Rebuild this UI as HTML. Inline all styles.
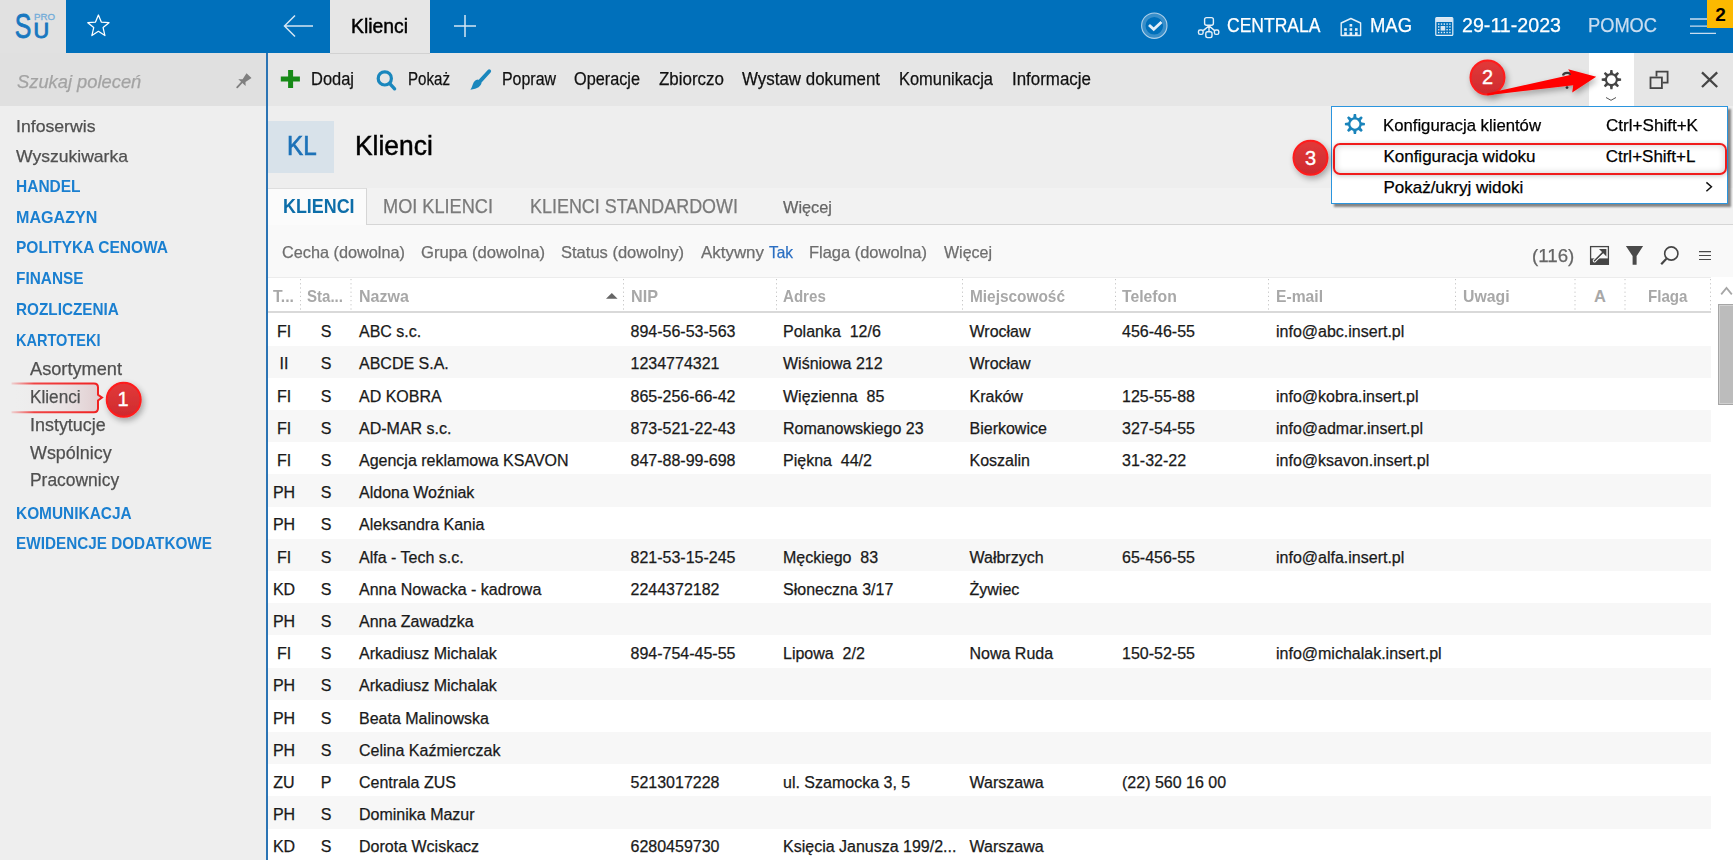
<!DOCTYPE html>
<html><head><meta charset="utf-8"><style>
html,body{margin:0;padding:0;}
body{width:1733px;height:860px;overflow:hidden;position:relative;background:#eeeeee;font-family:'Liberation Sans', sans-serif;}
.t{position:absolute;white-space:pre;line-height:1;}
.s{-webkit-text-stroke:0.25px currentColor;}
svg{position:absolute;overflow:visible;}
</style></head><body>
<div style="position:absolute;left:0px;top:0px;width:1733px;height:53px;background:#0070bb;"></div><div style="position:absolute;left:0px;top:0px;width:66px;height:53px;background:#e1e1e1;"></div><div style="position:absolute;left:0px;top:52.5px;width:266px;height:1.0px;background:#d8dfe6;"></div><div style="position:absolute;left:330px;top:0px;width:100px;height:53px;background:#e6e6e6;"></div><div style="position:absolute;left:0px;top:53px;width:266px;height:807px;background:#eeeeee;"></div><div style="position:absolute;left:0px;top:53px;width:266px;height:52.5px;background:#e0e0e0;"></div><div style="position:absolute;left:266px;top:53px;width:2px;height:807px;background:#2b74b4;"></div><div style="position:absolute;left:268px;top:53px;width:1465px;height:52.5px;background:#e6e6e6;"></div><div style="position:absolute;left:1589px;top:53px;width:45px;height:52.5px;background:#ffffff;"></div><div style="position:absolute;left:330px;top:53px;width:100px;height:1px;background:#d2d2d2;"></div><div style="position:absolute;left:268px;top:105.5px;width:1465px;height:82.5px;background:#eeeeee;"></div><div style="position:absolute;left:268px;top:121px;width:66px;height:52px;background:#d8e2ea;"></div><div style="position:absolute;left:268px;top:188px;width:1465px;height:37px;background:#f2f2f2;"></div><div style="position:absolute;left:268px;top:224.2px;width:1465px;height:1.0px;background:#d6d6d6;"></div><div style="position:absolute;left:268px;top:188px;width:99px;height:37.19999999999999px;background:#fbfbfb;border-top:1px solid #dedede;border-right:1px solid #d6d6d6;box-sizing:border-box;"></div><div style="position:absolute;left:268px;top:225.2px;width:1465px;height:51.80000000000001px;background:#f9f9f9;"></div><div style="position:absolute;left:268px;top:277px;width:1465px;height:1px;background:#ececec;"></div><div style="position:absolute;left:268px;top:278px;width:1443px;height:33px;background:#ffffff;"></div><div style="position:absolute;left:268px;top:311px;width:1443px;height:2px;background:#d9d9d9;box-shadow:0 1px 1px rgba(0,0,0,0.05);"></div><div style="position:absolute;left:1711px;top:277px;width:22px;height:583px;background:#ffffff;"></div><div style="position:absolute;left:1718px;top:304px;width:15px;height:100.5px;background:#bcbcbc;border:1.5px solid #a6a6a6;border-right:none;box-sizing:border-box;box-shadow:inset 1px 1px 0 #d0d0d0, inset 0 -1px 0 #d0d0d0;"></div><div style="position:absolute;left:268px;top:313px;width:1443px;height:547px;background:#ffffff;"></div><div style="position:absolute;left:268px;top:345.6px;width:1443px;height:32.19999999999999px;background:#f7f7f7;"></div><div style="position:absolute;left:268px;top:410.0px;width:1443px;height:32.19999999999999px;background:#f7f7f7;"></div><div style="position:absolute;left:268px;top:474.4px;width:1443px;height:32.200000000000045px;background:#f7f7f7;"></div><div style="position:absolute;left:268px;top:538.8px;width:1443px;height:32.200000000000045px;background:#f7f7f7;"></div><div style="position:absolute;left:268px;top:603.2px;width:1443px;height:32.19999999999993px;background:#f7f7f7;"></div><div style="position:absolute;left:268px;top:667.6px;width:1443px;height:32.19999999999993px;background:#f7f7f7;"></div><div style="position:absolute;left:268px;top:732.0px;width:1443px;height:32.200000000000045px;background:#f7f7f7;"></div><div style="position:absolute;left:268px;top:796.4px;width:1443px;height:32.200000000000045px;background:#f7f7f7;"></div><svg width="1733" height="860" style="left:0;top:0"><defs><linearGradient id="cg0" x1="0" y1="0" x2="1" y2="0"><stop offset="0" stop-color="#eeeeee" stop-opacity="0"/><stop offset="1" stop-color="#e0cbce"/></linearGradient></defs><path d="M11.5,383.4 H94 Q98,383.4 98,387.4 V394.8 L102,397.6 L98,400.4 V408.2 Q98,412.2 94,412.2 H11.5 Z" fill="url(#cg0)"/></svg><svg width="1733" height="860" style="left:0;top:0"><g stroke="#c4c4c4" stroke-width="1" stroke-dasharray="1.2 3"><line x1="300.5" y1="279" x2="300.5" y2="311" /><line x1="351.0" y1="279" x2="351.0" y2="311" /><line x1="623.5" y1="279" x2="623.5" y2="311" /><line x1="776.5" y1="279" x2="776.5" y2="311" /><line x1="962.5" y1="279" x2="962.5" y2="311" /><line x1="1115.5" y1="279" x2="1115.5" y2="311" /><line x1="1268.5" y1="279" x2="1268.5" y2="311" /><line x1="1455.5" y1="279" x2="1455.5" y2="311" /><line x1="1575.0" y1="279" x2="1575.0" y2="311" /><line x1="1625.0" y1="279" x2="1625.0" y2="311" /><line x1="1710.5" y1="279" x2="1710.5" y2="311" /></g></svg><div style="position:absolute;left:1331px;top:106px;width:397px;height:97.5px;background:#fff;border:1px solid #2b95de;box-sizing:border-box;box-shadow:3px 3px 2px rgba(0,0,0,0.45);"></div><div style="position:absolute;left:1333px;top:143px;width:394px;height:32px;border:2.5px solid #f01c1c;border-radius:7px;box-sizing:border-box;box-shadow:0 1px 5px rgba(0,0,0,0.22), inset 0 0 7px rgba(0,0,0,0.2);"></div>
<div class="t s" style="left:276.9px;top:324.16px;font-size:16px;font-weight:400;color:#1a1a1a;">FI</div><div class="t s" style="left:320.7px;top:324.16px;font-size:16px;font-weight:400;color:#1a1a1a;">S</div><div class="t s" style="left:359.0px;top:324.16px;font-size:16px;font-weight:400;color:#1a1a1a;">ABC s.c.</div><div class="t s" style="left:630.5px;top:324.16px;font-size:16px;font-weight:400;color:#1a1a1a;">894-56-53-563</div><div class="t s" style="left:783.0px;top:324.16px;font-size:16px;font-weight:400;color:#1a1a1a;">Polanka  12/6</div><div class="t s" style="left:969.5px;top:324.16px;font-size:16px;font-weight:400;color:#1a1a1a;">Wrocław</div><div class="t s" style="left:1122.0px;top:324.16px;font-size:16px;font-weight:400;color:#1a1a1a;">456-46-55</div><div class="t s" style="left:1276.0px;top:324.16px;font-size:16px;font-weight:400;color:#1a1a1a;">info@abc.insert.pl</div><div class="t s" style="left:279.6px;top:356.36px;font-size:16px;font-weight:400;color:#1a1a1a;">II</div><div class="t s" style="left:320.7px;top:356.36px;font-size:16px;font-weight:400;color:#1a1a1a;">S</div><div class="t s" style="left:359.0px;top:356.36px;font-size:16px;font-weight:400;color:#1a1a1a;">ABCDE S.A.</div><div class="t s" style="left:630.5px;top:356.36px;font-size:16px;font-weight:400;color:#1a1a1a;">1234774321</div><div class="t s" style="left:783.0px;top:356.36px;font-size:16px;font-weight:400;color:#1a1a1a;">Wiśniowa 212</div><div class="t s" style="left:969.5px;top:356.36px;font-size:16px;font-weight:400;color:#1a1a1a;">Wrocław</div><div class="t s" style="left:1122.0px;top:356.36px;font-size:16px;font-weight:400;color:#1a1a1a;"></div><div class="t s" style="left:1276.0px;top:356.36px;font-size:16px;font-weight:400;color:#1a1a1a;"></div><div class="t s" style="left:276.9px;top:388.56px;font-size:16px;font-weight:400;color:#1a1a1a;">FI</div><div class="t s" style="left:320.7px;top:388.56px;font-size:16px;font-weight:400;color:#1a1a1a;">S</div><div class="t s" style="left:359.0px;top:388.56px;font-size:16px;font-weight:400;color:#1a1a1a;">AD KOBRA</div><div class="t s" style="left:630.5px;top:388.56px;font-size:16px;font-weight:400;color:#1a1a1a;">865-256-66-42</div><div class="t s" style="left:783.0px;top:388.56px;font-size:16px;font-weight:400;color:#1a1a1a;">Więzienna  85</div><div class="t s" style="left:969.5px;top:388.56px;font-size:16px;font-weight:400;color:#1a1a1a;">Kraków</div><div class="t s" style="left:1122.0px;top:388.56px;font-size:16px;font-weight:400;color:#1a1a1a;">125-55-88</div><div class="t s" style="left:1276.0px;top:388.56px;font-size:16px;font-weight:400;color:#1a1a1a;">info@kobra.insert.pl</div><div class="t s" style="left:276.9px;top:420.76px;font-size:16px;font-weight:400;color:#1a1a1a;">FI</div><div class="t s" style="left:320.7px;top:420.76px;font-size:16px;font-weight:400;color:#1a1a1a;">S</div><div class="t s" style="left:359.0px;top:420.76px;font-size:16px;font-weight:400;color:#1a1a1a;">AD-MAR s.c.</div><div class="t s" style="left:630.5px;top:420.76px;font-size:16px;font-weight:400;color:#1a1a1a;">873-521-22-43</div><div class="t s" style="left:783.0px;top:420.76px;font-size:16px;font-weight:400;color:#1a1a1a;">Romanowskiego 23</div><div class="t s" style="left:969.5px;top:420.76px;font-size:16px;font-weight:400;color:#1a1a1a;">Bierkowice</div><div class="t s" style="left:1122.0px;top:420.76px;font-size:16px;font-weight:400;color:#1a1a1a;">327-54-55</div><div class="t s" style="left:1276.0px;top:420.76px;font-size:16px;font-weight:400;color:#1a1a1a;">info@admar.insert.pl</div><div class="t s" style="left:276.9px;top:452.96px;font-size:16px;font-weight:400;color:#1a1a1a;">FI</div><div class="t s" style="left:320.7px;top:452.96px;font-size:16px;font-weight:400;color:#1a1a1a;">S</div><div class="t s" style="left:359.0px;top:452.96px;font-size:16px;font-weight:400;color:#1a1a1a;">Agencja reklamowa KSAVON</div><div class="t s" style="left:630.5px;top:452.96px;font-size:16px;font-weight:400;color:#1a1a1a;">847-88-99-698</div><div class="t s" style="left:783.0px;top:452.96px;font-size:16px;font-weight:400;color:#1a1a1a;">Piękna  44/2</div><div class="t s" style="left:969.5px;top:452.96px;font-size:16px;font-weight:400;color:#1a1a1a;">Koszalin</div><div class="t s" style="left:1122.0px;top:452.96px;font-size:16px;font-weight:400;color:#1a1a1a;">31-32-22</div><div class="t s" style="left:1276.0px;top:452.96px;font-size:16px;font-weight:400;color:#1a1a1a;">info@ksavon.insert.pl</div><div class="t s" style="left:272.9px;top:485.16px;font-size:16px;font-weight:400;color:#1a1a1a;">PH</div><div class="t s" style="left:320.7px;top:485.16px;font-size:16px;font-weight:400;color:#1a1a1a;">S</div><div class="t s" style="left:359.0px;top:485.16px;font-size:16px;font-weight:400;color:#1a1a1a;">Aldona Woźniak</div><div class="t s" style="left:630.5px;top:485.16px;font-size:16px;font-weight:400;color:#1a1a1a;"></div><div class="t s" style="left:783.0px;top:485.16px;font-size:16px;font-weight:400;color:#1a1a1a;"></div><div class="t s" style="left:969.5px;top:485.16px;font-size:16px;font-weight:400;color:#1a1a1a;"></div><div class="t s" style="left:1122.0px;top:485.16px;font-size:16px;font-weight:400;color:#1a1a1a;"></div><div class="t s" style="left:1276.0px;top:485.16px;font-size:16px;font-weight:400;color:#1a1a1a;"></div><div class="t s" style="left:272.9px;top:517.36px;font-size:16px;font-weight:400;color:#1a1a1a;">PH</div><div class="t s" style="left:320.7px;top:517.36px;font-size:16px;font-weight:400;color:#1a1a1a;">S</div><div class="t s" style="left:359.0px;top:517.36px;font-size:16px;font-weight:400;color:#1a1a1a;">Aleksandra Kania</div><div class="t s" style="left:630.5px;top:517.36px;font-size:16px;font-weight:400;color:#1a1a1a;"></div><div class="t s" style="left:783.0px;top:517.36px;font-size:16px;font-weight:400;color:#1a1a1a;"></div><div class="t s" style="left:969.5px;top:517.36px;font-size:16px;font-weight:400;color:#1a1a1a;"></div><div class="t s" style="left:1122.0px;top:517.36px;font-size:16px;font-weight:400;color:#1a1a1a;"></div><div class="t s" style="left:1276.0px;top:517.36px;font-size:16px;font-weight:400;color:#1a1a1a;"></div><div class="t s" style="left:276.9px;top:549.56px;font-size:16px;font-weight:400;color:#1a1a1a;">FI</div><div class="t s" style="left:320.7px;top:549.56px;font-size:16px;font-weight:400;color:#1a1a1a;">S</div><div class="t s" style="left:359.0px;top:549.56px;font-size:16px;font-weight:400;color:#1a1a1a;">Alfa - Tech s.c.</div><div class="t s" style="left:630.5px;top:549.56px;font-size:16px;font-weight:400;color:#1a1a1a;">821-53-15-245</div><div class="t s" style="left:783.0px;top:549.56px;font-size:16px;font-weight:400;color:#1a1a1a;">Męckiego  83</div><div class="t s" style="left:969.5px;top:549.56px;font-size:16px;font-weight:400;color:#1a1a1a;">Wałbrzych</div><div class="t s" style="left:1122.0px;top:549.56px;font-size:16px;font-weight:400;color:#1a1a1a;">65-456-55</div><div class="t s" style="left:1276.0px;top:549.56px;font-size:16px;font-weight:400;color:#1a1a1a;">info@alfa.insert.pl</div><div class="t s" style="left:272.9px;top:581.76px;font-size:16px;font-weight:400;color:#1a1a1a;">KD</div><div class="t s" style="left:320.7px;top:581.76px;font-size:16px;font-weight:400;color:#1a1a1a;">S</div><div class="t s" style="left:359.0px;top:581.76px;font-size:16px;font-weight:400;color:#1a1a1a;">Anna Nowacka - kadrowa</div><div class="t s" style="left:630.5px;top:581.76px;font-size:16px;font-weight:400;color:#1a1a1a;">2244372182</div><div class="t s" style="left:783.0px;top:581.76px;font-size:16px;font-weight:400;color:#1a1a1a;">Słoneczna 3/17</div><div class="t s" style="left:969.5px;top:581.76px;font-size:16px;font-weight:400;color:#1a1a1a;">Żywiec</div><div class="t s" style="left:1122.0px;top:581.76px;font-size:16px;font-weight:400;color:#1a1a1a;"></div><div class="t s" style="left:1276.0px;top:581.76px;font-size:16px;font-weight:400;color:#1a1a1a;"></div><div class="t s" style="left:272.9px;top:613.96px;font-size:16px;font-weight:400;color:#1a1a1a;">PH</div><div class="t s" style="left:320.7px;top:613.96px;font-size:16px;font-weight:400;color:#1a1a1a;">S</div><div class="t s" style="left:359.0px;top:613.96px;font-size:16px;font-weight:400;color:#1a1a1a;">Anna Zawadzka</div><div class="t s" style="left:630.5px;top:613.96px;font-size:16px;font-weight:400;color:#1a1a1a;"></div><div class="t s" style="left:783.0px;top:613.96px;font-size:16px;font-weight:400;color:#1a1a1a;"></div><div class="t s" style="left:969.5px;top:613.96px;font-size:16px;font-weight:400;color:#1a1a1a;"></div><div class="t s" style="left:1122.0px;top:613.96px;font-size:16px;font-weight:400;color:#1a1a1a;"></div><div class="t s" style="left:1276.0px;top:613.96px;font-size:16px;font-weight:400;color:#1a1a1a;"></div><div class="t s" style="left:276.9px;top:646.16px;font-size:16px;font-weight:400;color:#1a1a1a;">FI</div><div class="t s" style="left:320.7px;top:646.16px;font-size:16px;font-weight:400;color:#1a1a1a;">S</div><div class="t s" style="left:359.0px;top:646.16px;font-size:16px;font-weight:400;color:#1a1a1a;">Arkadiusz Michalak</div><div class="t s" style="left:630.5px;top:646.16px;font-size:16px;font-weight:400;color:#1a1a1a;">894-754-45-55</div><div class="t s" style="left:783.0px;top:646.16px;font-size:16px;font-weight:400;color:#1a1a1a;">Lipowa  2/2</div><div class="t s" style="left:969.5px;top:646.16px;font-size:16px;font-weight:400;color:#1a1a1a;">Nowa Ruda</div><div class="t s" style="left:1122.0px;top:646.16px;font-size:16px;font-weight:400;color:#1a1a1a;">150-52-55</div><div class="t s" style="left:1276.0px;top:646.16px;font-size:16px;font-weight:400;color:#1a1a1a;">info@michalak.insert.pl</div><div class="t s" style="left:272.9px;top:678.36px;font-size:16px;font-weight:400;color:#1a1a1a;">PH</div><div class="t s" style="left:320.7px;top:678.36px;font-size:16px;font-weight:400;color:#1a1a1a;">S</div><div class="t s" style="left:359.0px;top:678.36px;font-size:16px;font-weight:400;color:#1a1a1a;">Arkadiusz Michalak</div><div class="t s" style="left:630.5px;top:678.36px;font-size:16px;font-weight:400;color:#1a1a1a;"></div><div class="t s" style="left:783.0px;top:678.36px;font-size:16px;font-weight:400;color:#1a1a1a;"></div><div class="t s" style="left:969.5px;top:678.36px;font-size:16px;font-weight:400;color:#1a1a1a;"></div><div class="t s" style="left:1122.0px;top:678.36px;font-size:16px;font-weight:400;color:#1a1a1a;"></div><div class="t s" style="left:1276.0px;top:678.36px;font-size:16px;font-weight:400;color:#1a1a1a;"></div><div class="t s" style="left:272.9px;top:710.56px;font-size:16px;font-weight:400;color:#1a1a1a;">PH</div><div class="t s" style="left:320.7px;top:710.56px;font-size:16px;font-weight:400;color:#1a1a1a;">S</div><div class="t s" style="left:359.0px;top:710.56px;font-size:16px;font-weight:400;color:#1a1a1a;">Beata Malinowska</div><div class="t s" style="left:630.5px;top:710.56px;font-size:16px;font-weight:400;color:#1a1a1a;"></div><div class="t s" style="left:783.0px;top:710.56px;font-size:16px;font-weight:400;color:#1a1a1a;"></div><div class="t s" style="left:969.5px;top:710.56px;font-size:16px;font-weight:400;color:#1a1a1a;"></div><div class="t s" style="left:1122.0px;top:710.56px;font-size:16px;font-weight:400;color:#1a1a1a;"></div><div class="t s" style="left:1276.0px;top:710.56px;font-size:16px;font-weight:400;color:#1a1a1a;"></div><div class="t s" style="left:272.9px;top:742.76px;font-size:16px;font-weight:400;color:#1a1a1a;">PH</div><div class="t s" style="left:320.7px;top:742.76px;font-size:16px;font-weight:400;color:#1a1a1a;">S</div><div class="t s" style="left:359.0px;top:742.76px;font-size:16px;font-weight:400;color:#1a1a1a;">Celina Kaźmierczak</div><div class="t s" style="left:630.5px;top:742.76px;font-size:16px;font-weight:400;color:#1a1a1a;"></div><div class="t s" style="left:783.0px;top:742.76px;font-size:16px;font-weight:400;color:#1a1a1a;"></div><div class="t s" style="left:969.5px;top:742.76px;font-size:16px;font-weight:400;color:#1a1a1a;"></div><div class="t s" style="left:1122.0px;top:742.76px;font-size:16px;font-weight:400;color:#1a1a1a;"></div><div class="t s" style="left:1276.0px;top:742.76px;font-size:16px;font-weight:400;color:#1a1a1a;"></div><div class="t s" style="left:273.3px;top:774.96px;font-size:16px;font-weight:400;color:#1a1a1a;">ZU</div><div class="t s" style="left:320.7px;top:774.96px;font-size:16px;font-weight:400;color:#1a1a1a;">P</div><div class="t s" style="left:359.0px;top:774.96px;font-size:16px;font-weight:400;color:#1a1a1a;">Centrala ZUS</div><div class="t s" style="left:630.5px;top:774.96px;font-size:16px;font-weight:400;color:#1a1a1a;">5213017228</div><div class="t s" style="left:783.0px;top:774.96px;font-size:16px;font-weight:400;color:#1a1a1a;">ul. Szamocka 3, 5</div><div class="t s" style="left:969.5px;top:774.96px;font-size:16px;font-weight:400;color:#1a1a1a;">Warszawa</div><div class="t s" style="left:1122.0px;top:774.96px;font-size:16px;font-weight:400;color:#1a1a1a;">(22) 560 16 00</div><div class="t s" style="left:1276.0px;top:774.96px;font-size:16px;font-weight:400;color:#1a1a1a;"></div><div class="t s" style="left:272.9px;top:807.16px;font-size:16px;font-weight:400;color:#1a1a1a;">PH</div><div class="t s" style="left:320.7px;top:807.16px;font-size:16px;font-weight:400;color:#1a1a1a;">S</div><div class="t s" style="left:359.0px;top:807.16px;font-size:16px;font-weight:400;color:#1a1a1a;">Dominika Mazur</div><div class="t s" style="left:630.5px;top:807.16px;font-size:16px;font-weight:400;color:#1a1a1a;"></div><div class="t s" style="left:783.0px;top:807.16px;font-size:16px;font-weight:400;color:#1a1a1a;"></div><div class="t s" style="left:969.5px;top:807.16px;font-size:16px;font-weight:400;color:#1a1a1a;"></div><div class="t s" style="left:1122.0px;top:807.16px;font-size:16px;font-weight:400;color:#1a1a1a;"></div><div class="t s" style="left:1276.0px;top:807.16px;font-size:16px;font-weight:400;color:#1a1a1a;"></div><div class="t s" style="left:272.9px;top:839.36px;font-size:16px;font-weight:400;color:#1a1a1a;">KD</div><div class="t s" style="left:320.7px;top:839.36px;font-size:16px;font-weight:400;color:#1a1a1a;">S</div><div class="t s" style="left:359.0px;top:839.36px;font-size:16px;font-weight:400;color:#1a1a1a;">Dorota Wciskacz</div><div class="t s" style="left:630.5px;top:839.36px;font-size:16px;font-weight:400;color:#1a1a1a;">6280459730</div><div class="t s" style="left:783.0px;top:839.36px;font-size:16px;font-weight:400;color:#1a1a1a;">Księcia Janusza 199/2...</div><div class="t s" style="left:969.5px;top:839.36px;font-size:16px;font-weight:400;color:#1a1a1a;">Warszawa</div><div class="t s" style="left:1122.0px;top:839.36px;font-size:16px;font-weight:400;color:#1a1a1a;"></div><div class="t s" style="left:1276.0px;top:839.36px;font-size:16px;font-weight:400;color:#1a1a1a;"></div><div class="t s" style="left:351.0px;top:16.69px;font-size:19.5px;font-weight:400;color:#000;-webkit-text-stroke:0.45px currentColor;transform:scaleX(0.9921);transform-origin:0 0;">Klienci</div><div class="t s" style="left:1227.0px;top:15.69px;font-size:19.5px;font-weight:400;color:#ffffff;transform:scaleX(0.8988);transform-origin:0 0;">CENTRALA</div><div class="t s" style="left:1370.0px;top:15.69px;font-size:19.5px;font-weight:400;color:#ffffff;transform:scaleX(0.9455);transform-origin:0 0;">MAG</div><div class="t s" style="left:1462.0px;top:15.99px;font-size:19.5px;font-weight:400;color:#ffffff;transform:scaleX(1.0070);transform-origin:0 0;">29-11-2023</div><div class="t s" style="left:1588.0px;top:15.99px;font-size:19.5px;font-weight:400;color:#c9ddf0;transform:scaleX(0.9366);transform-origin:0 0;">POMOC</div><div class="t s" style="left:16.7px;top:71.92px;font-size:19px;font-weight:400;color:#a3a3a3;font-style:italic;transform:scaleX(0.9645);transform-origin:0 0;">Szukaj poleceń</div><div class="t s" style="left:16.0px;top:118.31px;font-size:17px;font-weight:400;color:#505050;transform:scaleX(1.0388);transform-origin:0 0;">Infoserwis</div><div class="t s" style="left:16.0px;top:147.61px;font-size:17px;font-weight:400;color:#505050;transform:scaleX(1.0324);transform-origin:0 0;">Wyszukiwarka</div><div class="t" style="left:16.0px;top:178.33px;font-size:16.5px;font-weight:700;color:#1a7fd0;transform:scaleX(0.9396);transform-origin:0 0;">HANDEL</div><div class="t" style="left:16.0px;top:208.73px;font-size:16.5px;font-weight:700;color:#1a7fd0;transform:scaleX(0.9746);transform-origin:0 0;">MAGAZYN</div><div class="t" style="left:16.0px;top:238.83px;font-size:16.5px;font-weight:700;color:#1a7fd0;transform:scaleX(0.9404);transform-origin:0 0;">POLITYKA CENOWA</div><div class="t" style="left:16.0px;top:269.73px;font-size:16.5px;font-weight:700;color:#1a7fd0;transform:scaleX(0.9320);transform-origin:0 0;">FINANSE</div><div class="t" style="left:16.0px;top:300.63px;font-size:16.5px;font-weight:700;color:#1a7fd0;transform:scaleX(0.9277);transform-origin:0 0;">ROZLICZENIA</div><div class="t" style="left:16.0px;top:331.63px;font-size:16.5px;font-weight:700;color:#1a7fd0;transform:scaleX(0.8806);transform-origin:0 0;">KARTOTEKI</div><div class="t" style="left:16.0px;top:504.53px;font-size:16.5px;font-weight:700;color:#1a7fd0;transform:scaleX(0.9341);transform-origin:0 0;">KOMUNIKACJA</div><div class="t" style="left:16.0px;top:534.63px;font-size:16.5px;font-weight:700;color:#1a7fd0;transform:scaleX(0.9269);transform-origin:0 0;">EWIDENCJE DODATKOWE</div><div class="t s" style="left:30.0px;top:360.69px;font-size:17.5px;font-weight:400;color:#505050;transform:scaleX(1.0395);transform-origin:0 0;">Asortyment</div><div class="t s" style="left:30.0px;top:388.59px;font-size:17.5px;font-weight:400;color:#505050;transform:scaleX(0.9813);transform-origin:0 0;">Klienci</div><div class="t s" style="left:30.0px;top:416.59px;font-size:17.5px;font-weight:400;color:#505050;transform:scaleX(1.0238);transform-origin:0 0;">Instytucje</div><div class="t s" style="left:30.0px;top:444.69px;font-size:17.5px;font-weight:400;color:#505050;transform:scaleX(1.0232);transform-origin:0 0;">Wspólnicy</div><div class="t s" style="left:30.0px;top:472.49px;font-size:17.5px;font-weight:400;color:#505050;transform:scaleX(0.9957);transform-origin:0 0;">Pracownicy</div><div class="t s" style="left:311.0px;top:70.69px;font-size:17.5px;font-weight:400;color:#111;transform:scaleX(0.9402);transform-origin:0 0;">Dodaj</div><div class="t s" style="left:408.0px;top:70.69px;font-size:17.5px;font-weight:400;color:#111;transform:scaleX(0.8635);transform-origin:0 0;">Pokaż</div><div class="t s" style="left:502.0px;top:70.69px;font-size:17.5px;font-weight:400;color:#111;transform:scaleX(0.9100);transform-origin:0 0;">Popraw</div><div class="t s" style="left:574.0px;top:70.69px;font-size:17.5px;font-weight:400;color:#111;transform:scaleX(0.9294);transform-origin:0 0;">Operacje</div><div class="t s" style="left:659.0px;top:70.69px;font-size:17.5px;font-weight:400;color:#111;transform:scaleX(0.9686);transform-origin:0 0;">Zbiorczo</div><div class="t s" style="left:742.0px;top:70.69px;font-size:17.5px;font-weight:400;color:#111;transform:scaleX(0.9663);transform-origin:0 0;">Wystaw dokument</div><div class="t s" style="left:899.0px;top:70.69px;font-size:17.5px;font-weight:400;color:#111;transform:scaleX(0.9381);transform-origin:0 0;">Komunikacja</div><div class="t s" style="left:1012.0px;top:70.69px;font-size:17.5px;font-weight:400;color:#111;transform:scaleX(0.9669);transform-origin:0 0;">Informacje</div><div class="t s" style="left:287.0px;top:132.30px;font-size:28px;font-weight:400;color:#1d72b8;-webkit-text-stroke:0.7px currentColor;transform:scaleX(0.8642);transform-origin:0 0;">KL</div><div class="t s" style="left:355.0px;top:132.30px;font-size:28px;font-weight:400;color:#000;-webkit-text-stroke:0.5px currentColor;transform:scaleX(0.9432);transform-origin:0 0;">Klienci</div><div class="t" style="left:282.5px;top:197.49px;font-size:19.5px;font-weight:700;color:#0d6ea9;transform:scaleX(0.9167);transform-origin:0 0;">KLIENCI</div><div class="t s" style="left:383.0px;top:197.49px;font-size:19.5px;font-weight:400;color:#7a7a7a;transform:scaleX(0.9313);transform-origin:0 0;">MOI KLIENCI</div><div class="t s" style="left:530.0px;top:197.49px;font-size:19.5px;font-weight:400;color:#7a7a7a;transform:scaleX(0.9200);transform-origin:0 0;">KLIENCI STANDARDOWI</div><div class="t s" style="left:783.0px;top:198.81px;font-size:17px;font-weight:400;color:#666;transform:scaleX(0.9605);transform-origin:0 0;">Więcej</div><div class="t s" style="left:282.0px;top:243.53px;font-size:16.5px;font-weight:400;color:#6e6e6e;transform:scaleX(0.9861);transform-origin:0 0;">Cecha (dowolna)</div><div class="t s" style="left:421.0px;top:243.53px;font-size:16.5px;font-weight:400;color:#6e6e6e;transform:scaleX(1.0089);transform-origin:0 0;">Grupa (dowolna)</div><div class="t s" style="left:561.0px;top:243.53px;font-size:16.5px;font-weight:400;color:#6e6e6e;transform:scaleX(1.0009);transform-origin:0 0;">Status (dowolny)</div><div class="t s" style="left:701.0px;top:243.53px;font-size:16.5px;font-weight:400;color:#6e6e6e;transform:scaleX(1.0254);transform-origin:0 0;">Aktywny</div><div class="t s" style="left:809.0px;top:243.53px;font-size:16.5px;font-weight:400;color:#6e6e6e;transform:scaleX(0.9974);transform-origin:0 0;">Flaga (dowolna)</div><div class="t s" style="left:944.0px;top:243.53px;font-size:16.5px;font-weight:400;color:#6e6e6e;transform:scaleX(0.9694);transform-origin:0 0;">Więcej</div><div class="t s" style="left:769.0px;top:243.53px;font-size:16.5px;font-weight:400;color:#2b6fc2;transform:scaleX(0.9343);transform-origin:0 0;">Tak</div><div class="t s" style="left:1532.3px;top:247.04px;font-size:18.5px;font-weight:400;color:#666;transform:scaleX(1.0113);transform-origin:0 0;">(116)</div><div class="t" style="left:273.3px;top:287.73px;font-size:16.5px;font-weight:700;color:#a8a8a8;transform:scaleX(0.9539);transform-origin:0 0;">T...</div><div class="t" style="left:307.0px;top:287.73px;font-size:16.5px;font-weight:700;color:#a8a8a8;transform:scaleX(0.9128);transform-origin:0 0;">Sta...</div><div class="t" style="left:359.0px;top:287.73px;font-size:16.5px;font-weight:700;color:#a8a8a8;transform:scaleX(0.9696);transform-origin:0 0;">Nazwa</div><div class="t" style="left:630.7px;top:287.73px;font-size:16.5px;font-weight:700;color:#a8a8a8;transform:scaleX(0.9813);transform-origin:0 0;">NIP</div><div class="t" style="left:783.0px;top:287.73px;font-size:16.5px;font-weight:700;color:#a8a8a8;transform:scaleX(0.9149);transform-origin:0 0;">Adres</div><div class="t" style="left:969.7px;top:287.73px;font-size:16.5px;font-weight:700;color:#a8a8a8;transform:scaleX(0.9332);transform-origin:0 0;">Miejscowość</div><div class="t" style="left:1121.6px;top:287.73px;font-size:16.5px;font-weight:700;color:#a8a8a8;transform:scaleX(0.9538);transform-origin:0 0;">Telefon</div><div class="t" style="left:1276.0px;top:287.73px;font-size:16.5px;font-weight:700;color:#a8a8a8;transform:scaleX(0.9489);transform-origin:0 0;">E-mail</div><div class="t" style="left:1462.5px;top:287.73px;font-size:16.5px;font-weight:700;color:#a8a8a8;transform:scaleX(0.9590);transform-origin:0 0;">Uwagi</div><div class="t" style="left:1648.3px;top:287.73px;font-size:16.5px;font-weight:700;color:#a8a8a8;transform:scaleX(0.9163);transform-origin:0 0;">Flaga</div><div class="t" style="left:1594.0px;top:287.73px;font-size:16.5px;font-weight:700;color:#a8a8a8;">A</div><div class="t s" style="left:1383.4px;top:117.01px;font-size:17px;font-weight:400;color:#000;transform:scaleX(0.9835);transform-origin:0 0;">Konfiguracja klientów</div><div class="t s" style="left:1605.7px;top:117.01px;font-size:17px;font-weight:400;color:#000;transform:scaleX(1.0038);transform-origin:0 0;">Ctrl+Shift+K</div><div class="t s" style="left:1383.4px;top:147.71px;font-size:17px;font-weight:400;color:#000;">Konfiguracja widoku</div><div class="t s" style="left:1605.7px;top:147.71px;font-size:17px;font-weight:400;color:#000;">Ctrl+Shift+L</div><div class="t s" style="left:1383.4px;top:178.71px;font-size:17px;font-weight:400;color:#000;">Pokaż/ukryj widoki</div>
<svg width="1733" height="860" viewBox="0 0 1733 860" style="left:0;top:0;">
<defs>
<filter id="sh" x="-50%" y="-50%" width="200%" height="200%"><feGaussianBlur in="SourceAlpha" stdDeviation="3"/><feOffset dx="1.5" dy="2.5"/><feComponentTransfer><feFuncA type="linear" slope="0.32"/></feComponentTransfer><feMerge><feMergeNode/><feMergeNode in="SourceGraphic"/></feMerge></filter>
<linearGradient id="bg1" x1="0" y1="0" x2="0" y2="1"><stop offset="0" stop-color="#e23a3a"/><stop offset="1" stop-color="#cf2a2e"/></linearGradient>
<linearGradient id="cg" x1="0" y1="0" x2="1" y2="0"><stop offset="0" stop-color="#eeeeee" stop-opacity="0"/><stop offset="1" stop-color="#e2cdd0"/></linearGradient>
<linearGradient id="cb" x1="0" y1="0" x2="1" y2="0"><stop offset="0" stop-color="#f03030" stop-opacity="0.15"/><stop offset="0.25" stop-color="#f03030" stop-opacity="0.9"/><stop offset="1" stop-color="#f02020"/></linearGradient>
</defs>
<!-- logo -->
<text x="14.8" y="38" font-family="Liberation Sans" font-size="35" fill="#1878c0" stroke="#1878c0" stroke-width="0.8" textLength="16.6" lengthAdjust="spacingAndGlyphs">S</text>
<text x="33.6" y="38" font-family="Liberation Sans" font-size="22" fill="#1878c0" stroke="#1878c0" stroke-width="1" textLength="15.6" lengthAdjust="spacingAndGlyphs">U</text>
<text x="34" y="20.2" font-family="Liberation Sans" font-size="9.8" fill="#72acd9" stroke="#72acd9" stroke-width="0.3" textLength="21" lengthAdjust="spacingAndGlyphs">PRO</text>
<!-- star -->
<path d="M98.4,15 L101.3,22.1 L109,22.7 L103.1,27.6 L104.9,35.6 L98.4,31.3 L91.9,35.6 L93.7,27.6 L87.8,22.7 L95.5,22.1 Z" fill="none" stroke="#ffffff" stroke-width="1.25" stroke-linejoin="round"/>
<!-- back arrow -->
<path d="M313,26 H285 M295,15.5 L284.5,26 L295,36.5" fill="none" stroke="#d4e5f3" stroke-width="1.5"/>
<!-- header plus -->
<path d="M465,15 V37 M454,26 H476" fill="none" stroke="#d4e5f3" stroke-width="1.5"/>
<!-- check circle -->
<circle cx="1154.3" cy="25.7" r="10.8" fill="none" stroke="#ffffff" stroke-opacity="0.22" stroke-width="4"/>
<circle cx="1154.3" cy="25.7" r="12.7" fill="none" stroke="#dce9f5" stroke-opacity="0.75" stroke-width="1.1"/>
<path d="M1149,25 L1153.7,29.3 L1161.5,22" fill="none" stroke="#e3eef8" stroke-width="2.8"/>
<!-- network icon -->
<g fill="none" stroke="#e6f0f8" stroke-width="1.4">
<rect x="1204.6" y="17.6" width="8.8" height="7.6" rx="2"/>
<rect x="1205.8" y="31.8" width="6.2" height="5.8" rx="1.8"/>
<rect x="1198.5" y="30" width="4.6" height="4.4" rx="1.6"/>
<rect x="1214.4" y="30" width="4.4" height="4.4" rx="1.6"/>
<path d="M1209,25.2 V31.8 M1208.5,26.2 L1203.2,30.6 M1209.5,26.2 L1214.6,30.6"/>
</g>
<!-- warehouse -->
<path d="M1341.2,35.5 V23 L1350.9,18.5 L1360.6,23 V35.5 Z" fill="none" stroke="#e6f0f8" stroke-width="1.4" stroke-linejoin="round"/>
<g fill="#e6f0f8">
<rect x="1349.6" y="24" width="2.6" height="2.6"/>
<rect x="1344.2" y="28.2" width="2.6" height="2.6"/><rect x="1349.6" y="28.2" width="2.6" height="2.6"/><rect x="1355" y="28.2" width="2.6" height="2.6"/>
<rect x="1344.2" y="32.2" width="2.6" height="2.8"/><rect x="1349.6" y="32.2" width="2.6" height="2.8"/><rect x="1355" y="32.2" width="2.6" height="2.8"/>
</g>
<!-- calendar -->
<rect x="1435.8" y="17.6" width="17" height="17.8" rx="1" fill="none" stroke="#e6f0f8" stroke-width="1.2"/>
<rect x="1435.8" y="17.6" width="17" height="4.4" fill="#d6e6f3"/>
<g fill="#e6f0f8">
<rect x="1438" y="23.4" width="1.4" height="1.4"/><rect x="1440.8" y="23.4" width="1.4" height="1.4"/><rect x="1443.6" y="23.4" width="1.4" height="1.4"/><rect x="1446.4" y="23.4" width="1.4" height="1.4"/><rect x="1449.2" y="23.4" width="1.4" height="1.4"/>
<rect x="1438" y="26.2" width="1.4" height="1.4"/><rect x="1446.4" y="26.2" width="1.4" height="1.4"/><rect x="1449.2" y="26.2" width="1.4" height="1.4"/>
<rect x="1438" y="29" width="1.4" height="1.4"/><rect x="1446.4" y="29" width="1.4" height="1.4"/><rect x="1449.2" y="29" width="1.4" height="1.4"/>
<rect x="1438" y="31.8" width="1.4" height="1.4"/><rect x="1440.8" y="31.8" width="1.4" height="1.4"/><rect x="1443.6" y="31.8" width="1.4" height="1.4"/><rect x="1446.4" y="31.8" width="1.4" height="1.4"/><rect x="1449.2" y="31.8" width="1.4" height="1.4"/>
<rect x="1440.6" y="26" width="4.6" height="4.6" fill="#d6e6f3"/>
</g>
<!-- hamburger header -->
<path d="M1690,19 H1716 M1690,26.2 H1716 M1690,33.4 H1716" stroke="#c9ddf0" stroke-width="1.3"/>
<rect x="1707" y="0" width="26" height="28" fill="#fcb900"/>
<text x="1720.6" y="21" font-family="Liberation Sans" font-weight="700" font-size="19" fill="#000" text-anchor="middle">2</text>
<!-- pin -->
<path d="M238.3,79.3 L242.6,79.2 L246.5,73.2 L251.5,77.9 L245.5,81.9 L245.6,85.9 Z" fill="#7f7f7f"/>
<path d="M241.8,82.4 L237.2,87.4" stroke="#7f7f7f" stroke-width="1.8" stroke-linecap="round"/>
<!-- toolbar: green plus -->
<path d="M280.8,79 H299.9 M290.6,70 V88" stroke="#178a17" stroke-width="5"/>
<!-- search -->
<circle cx="384.8" cy="78.4" r="6.6" fill="none" stroke="#1a87bd" stroke-width="3.2"/>
<path d="M389.6,83.4 L394.6,88.8" stroke="#1a87bd" stroke-width="3.4" stroke-linecap="round"/>
<!-- brush -->
<path d="M489.2,71.2 L480.6,80.6" stroke="#1a87bd" stroke-width="3.8" stroke-linecap="round"/>
<path d="M478.2,79.4 L481.6,82.6 C481.2,86 477.6,89.2 470.4,89.8 C472.2,87.6 472.2,85.2 473.6,82.6 C474.8,80.4 476.4,79.4 478.2,79.4 Z" fill="#1a87bd"/>
<!-- help ? partially hidden -->
<path d="M1563,75.5 C1563.5,72.5 1570.5,71.5 1571,75.5 C1571.3,78.5 1567,79.5 1567,82.5" fill="none" stroke="#3c3c3c" stroke-width="2.2"/>
<circle cx="1567" cy="87.6" r="1.4" fill="#3c3c3c"/>
<!-- gear toolbar -->
<g transform="translate(1611.4,79.6)" fill="#454545">
<circle r="5.5" fill="none" stroke="#454545" stroke-width="2.1"/>
<path d="M-1.6,-5.6 L-1.05,-9.7 H1.05 L1.6,-5.6 Z" transform="rotate(0)"/><path d="M-1.6,-5.6 L-1.05,-9.7 H1.05 L1.6,-5.6 Z" transform="rotate(45)"/><path d="M-1.6,-5.6 L-1.05,-9.7 H1.05 L1.6,-5.6 Z" transform="rotate(90)"/><path d="M-1.6,-5.6 L-1.05,-9.7 H1.05 L1.6,-5.6 Z" transform="rotate(135)"/><path d="M-1.6,-5.6 L-1.05,-9.7 H1.05 L1.6,-5.6 Z" transform="rotate(180)"/><path d="M-1.6,-5.6 L-1.05,-9.7 H1.05 L1.6,-5.6 Z" transform="rotate(225)"/><path d="M-1.6,-5.6 L-1.05,-9.7 H1.05 L1.6,-5.6 Z" transform="rotate(270)"/><path d="M-1.6,-5.6 L-1.05,-9.7 H1.05 L1.6,-5.6 Z" transform="rotate(315)"/>
</g>
<path d="M1606,97.5 L1611,100.3 L1616,97.5" fill="none" stroke="#555" stroke-width="1"/>
<!-- restore -->
<path d="M1656.5,76.6 V71.6 H1667.6 V82.7 H1662.6" fill="none" stroke="#454545" stroke-width="1.8"/>
<rect x="1650.5" y="77.5" width="11.4" height="10.6" fill="none" stroke="#454545" stroke-width="1.8"/>
<!-- close -->
<path d="M1702,72.4 L1717.2,87 M1717.2,72.4 L1702,87" stroke="#454545" stroke-width="2.3"/>
<!-- menu gear (blue) -->
<g transform="translate(1354.9,124.1)" fill="#1a84bb">
<circle r="5.7" fill="none" stroke="#1a84bb" stroke-width="2.3"/>
<path d="M-1.75,-5.8 L-1.15,-10 H1.15 L1.75,-5.8 Z" transform="rotate(0)"/><path d="M-1.75,-5.8 L-1.15,-10 H1.15 L1.75,-5.8 Z" transform="rotate(45)"/><path d="M-1.75,-5.8 L-1.15,-10 H1.15 L1.75,-5.8 Z" transform="rotate(90)"/><path d="M-1.75,-5.8 L-1.15,-10 H1.15 L1.75,-5.8 Z" transform="rotate(135)"/><path d="M-1.75,-5.8 L-1.15,-10 H1.15 L1.75,-5.8 Z" transform="rotate(180)"/><path d="M-1.75,-5.8 L-1.15,-10 H1.15 L1.75,-5.8 Z" transform="rotate(225)"/><path d="M-1.75,-5.8 L-1.15,-10 H1.15 L1.75,-5.8 Z" transform="rotate(270)"/><path d="M-1.75,-5.8 L-1.15,-10 H1.15 L1.75,-5.8 Z" transform="rotate(315)"/>
</g>
<path d="M1706.4,182.4 L1711.4,186.8 L1706.4,191.2" fill="none" stroke="#111" stroke-width="1.5"/>
<!-- filter row icons -->
<rect x="1590.6" y="246.6" width="17.8" height="17.6" fill="none" stroke="#454545" stroke-width="1.3"/>
<rect x="1590" y="258.4" width="19" height="6.4" fill="#454545"/>
<path d="M1594.5,260.8 L1604.6,250.6" stroke="#ffffff" stroke-width="3.4" stroke-linecap="round"/>
<path d="M1594.5,260.8 L1604.6,250.6" stroke="#454545" stroke-width="1.6" stroke-linecap="round"/>
<path d="M1599,249 H1606.4 V256.4 Z" fill="#454545"/>
<path d="M1625.9,246 H1643.1 L1636.6,256.1 V264.8 H1632.6 V256.1 Z" fill="#4a4a4a"/>
<circle cx="1671.3" cy="253.5" r="6.6" fill="none" stroke="#454545" stroke-width="1.6"/>
<path d="M1666.4,258.8 L1661.2,264.2" stroke="#454545" stroke-width="2.2"/>
<path d="M1699,251.6 H1711 M1699,255.5 H1711 M1699,259.5 H1711" stroke="#4a4a4a" stroke-width="1.2"/>
<!-- sort arrow -->
<path d="M606,298.7 L611.8,293 L617.6,298.7 Z" fill="#666"/>
<!-- scrollbar up chevron -->
<path d="M1721.2,294.4 L1726.5,288 L1731.8,294.4" fill="none" stroke="#a6a6a6" stroke-width="1.8"/>
<!-- callout for Klienci -->
<path d="M11.5,383.4 H94 Q98,383.4 98,387.4 V394.8 L102,397.6 L98,400.4 V408.2 Q98,412.2 94,412.2 H11.5" fill="none" stroke="url(#cb)" stroke-width="2"/>
<!-- badges -->
<g filter="url(#sh)">
<circle cx="123.7" cy="399.7" r="17" fill="url(#bg1)" stroke="#ff1c1c" stroke-width="2"/>
<circle cx="1487.5" cy="77.6" r="17" fill="url(#bg1)" stroke="#ff1c1c" stroke-width="2"/>
<circle cx="1310.5" cy="157.7" r="17" fill="url(#bg1)" stroke="#ff1c1c" stroke-width="2"/>
</g>
<g font-family="Liberation Sans" font-weight="400" font-size="20" fill="#ffffff" stroke="#ffffff" stroke-width="0.35" text-anchor="middle">
<text x="123" y="406.4">1</text>
<text x="1487.5" y="84.4">2</text>
<text x="1310.5" y="164.6">3</text>
</g>
<!-- red arrow -->
<path d="M1487.6,95.2 L1487,93.6 L1571.2,74.7 L1568.2,69.3 L1596.2,76.7 L1572.2,92.4 L1573.2,85.3 Z" fill="#ff0000" filter="url(#sh)"/>
</svg>

</body></html>
